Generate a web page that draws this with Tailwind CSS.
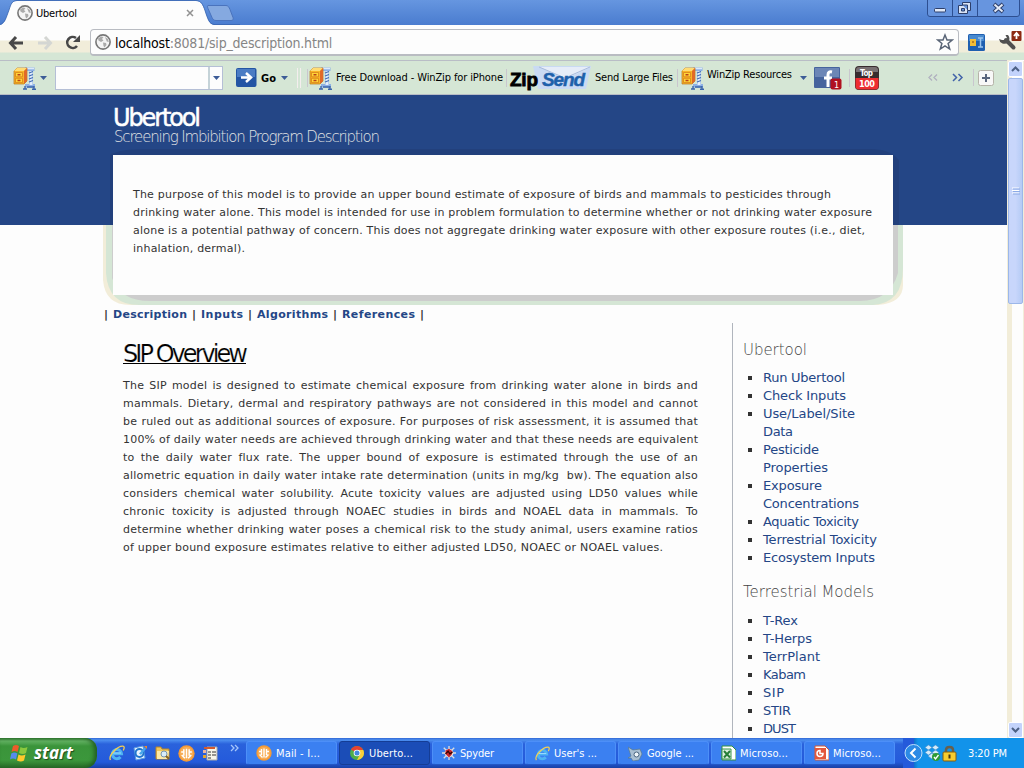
<!DOCTYPE html>
<html lang="en">
<head>
<meta charset="utf-8">
<title>Ubertool</title>
<script src="https://cdn.jsdelivr.net/npm/@tailwindcss/browser@4"></script>
</head>
<body class="w-[1024px] h-[768px] overflow-hidden flex flex-col bg-[#fdfdfd] text-[#333] font-['DejaVu_Sans',sans-serif] text-[11px] leading-[18px]">
<svg class="hidden">
  <symbol id="globe" viewBox="0 0 16 16"><circle cx="8" cy="8" r="7.1" fill="#f4f4f4" stroke="#777" stroke-width="1.6"/><path d="M3 4.5 6 2.5 8.5 3 7 5 8.5 6.5 6 8 3.5 6.5zM8 8.5 11 9 11.5 11 9.5 13.6 8.5 12zM10 3l3 2 .8 3-2-.5z" fill="#aaa"/></symbol>
  <symbol id="winzip" viewBox="0 0 24 24"><path d="M12 1.500h9.500v3.500h-1.500v13h2v3.500H12V18h4V5h-4z" fill="#8db0e4"/><path d="M14 2.500h7" stroke="#dce9fa" stroke-width="1.600"/><path d="M18 5v14" stroke="#e4eefb" stroke-width="3"/><path d="M16 7l4-1.500M16 10l4-1.500M16 13l4-1.500M16 16l4-1.500" stroke="#3f6cb4" stroke-width="1.200"/><path d="M10 23h4M12 23v-3M14 21h7M19 23.300h4M21 23v-3" stroke="#3b65ac" stroke-width="1.400"/><path d="M1 5l3-3h10v13l-3 3H1z" fill="#f8b526" stroke="#b9741c" stroke-width=".7"/><path d="M1 5l3-3h10l-3 3z" fill="#ffdc75"/><path d="M11 5v13l3-3V2z" fill="#e06a28"/><path d="M2.500 6.500h7v4.300h-7zM2.500 12.300h7v4.300h-7z" fill="#ffd437" stroke="#d8801c" stroke-width=".8"/><path d="M4.500 8.800h3M4.500 14.500h3" stroke="#b8401a" stroke-width="1.500"/></symbol>
  <symbol id="down" viewBox="0 0 7 4"><path d="M0 0h7L3.5 4z" fill="#3d5c97"/></symbol>
  <symbol id="ie" viewBox="0 0 16 16"><path d="M3 8.700h9.500A4.600 4.600 0 1 0 11.500 12" fill="none" stroke="#4fb4f3" stroke-width="3"/><path d="M4 8h8" stroke="#9bdcfd" stroke-width="1"/><path d="M1.500 15C-1 11 8 1 14 1.200c2 .3 1 3 .2 4.300" fill="none" stroke="#f5cf52" stroke-width="1.300"/></symbol>
  <symbol id="orange" viewBox="0 0 16 16"><circle cx="8" cy="8" r="7.700" fill="#f59a35"/><circle cx="8" cy="8" r="6.300" fill="#f7ad56"/><path d="M3 6.500h2.500V4M13 6.500h-2.500V4M8 3.500v9M3.500 9.500l3 3M12.500 9.500l-3 3M5.500 7v3M10.500 7v3" stroke="#fff" stroke-width="1.400" fill="none"/></symbol>
</svg>

<!-- Tab strip -->
<header class="relative h-[25px] shrink-0 bg-gradient-to-b from-[#6696e0] to-[#4a7ccf]">
  <svg class="absolute left-0 top-0" width="240" height="25"><path d="M0 25C5 24 6 18 9 10 11 4 12 1 17 1H196c5 0 7 4 9 10 3 9 4 13 9 14z" fill="#fdfdfd"/><path d="M0 24.500C5 23 6 18 9 10 11 4 12 .5 17 .5H196c5 0 7 4 9 10 3 9 4 13 9 14H240" fill="none" stroke="#3a66b0" stroke-width=".8"/><path d="M208 5.500h18c2 0 3 1.500 4 4l3 8c.6 2 0 3-2 3h-15c-2 0-3-1-4-3l-4-9c-.8-2-.5-3 0-3z" fill="#85a9e0" stroke="#4a73bd"/></svg>
  <div class="relative flex items-center h-[26px] pl-[17px] text-black font-['DejaVu_Sans_Condensed','DejaVu_Sans']">
    <svg width="16" height="16"><use href="#globe"/></svg>
    <span class="ml-[3px] w-[150px] pt-px whitespace-nowrap"><span data-w="41">Ubertool</span></span>
    <svg width="8" height="8" viewBox="0 0 8 8"><path d="M1 1l6 6M7 1 1 7" stroke="#929292" stroke-width="1.500"/></svg>
  </div>
  <svg class="absolute left-[927px] top-0" width="94" height="18"><path d="M.5 0v14q0 2.500 2.500 2.500h87q2.500 0 2.500-2.500V0M25.500 0v16M50.500 0v16" fill="#6795df" stroke="#2d4f91"/><rect x="7.500" y="8.500" width="11" height="3.500" rx="1" fill="#e2eaf8" stroke="#2d3f6b"/><path d="M35.500 2.500h8v8h-3v3h-9v-8h4z" fill="#d9e3f5" stroke="#2d3f6b"/><path d="M34.500 8.500h3v2.500h-3zM35.500 5h5v5" fill="#6795df" stroke="#2d3f6b"/><path d="M67 4l9 8M76 4l-9 8" stroke="#2d3f6b" stroke-width="4"/><path d="M67.500 4.500l8 7M75.500 4.500l-8 7" stroke="#e2eaf8" stroke-width="2"/></svg>
</header>

<!-- Address bar -->
<div class="flex items-center h-[35px] shrink-0 pl-[8px] bg-[linear-gradient(#fdfdfd_0,#fdfdfd_15px,#f1edda_16px,#f1edda_27px,#d5e6d5_28px)]">
  <svg width="82" height="20" viewBox="0 0 82 20"><path d="M15 10H3M8 4 2.500 10 8 16" fill="none" stroke="#484848" stroke-width="3"/><path d="M30 10h12M37 4l5.500 6L37 16" fill="none" stroke="#d4d6d3" stroke-width="3"/><path d="M69 13a5.500 5.500 0 1 1-1-8" fill="none" stroke="#484848" stroke-width="2.600"/><path d="M65 9h7V2z" fill="#484848"/></svg>
  <div class="flex items-center w-[869px] h-[27px] rounded-[4px] border border-[#b9bcc2] border-b-2 bg-[#fdfdfd] pl-[4px] pr-[4px]">
    <svg width="16" height="16"><use href="#globe"/></svg>
    <div class="ml-[4px] pt-px flex-1 text-[14px] text-[#858585] whitespace-nowrap font-['DejaVu_Sans_Condensed','DejaVu_Sans']"><span data-w="217">​<span class="text-black">localhost</span>:8081/sip_description.html</span></div>
    <svg width="18" height="18" viewBox="0 0 18 18"><path d="M9 2l2 5h5.300l-4.200 3.500L13.700 16 9 12.800 4.300 16l1.600-5.500L1.700 7H7z" fill="#fff" stroke="#5a6577" stroke-width="1.500"/></svg>
  </div>
  <svg class="ml-[9px]" width="17" height="17" viewBox="0 0 17 17"><rect width="17" height="17" rx="1.500" fill="#1f5fb0"/><path d="M1 1h15v6H1z" fill="#4789cf"/><path d="M2 5h6v7H2z" fill="#f5bd36"/><path d="M4 8h2" stroke="#8a4a10"/><path d="M10 4h5M12.500 4v9M10 13h5" stroke="#9cc5ee" stroke-width="1.500"/></svg>
  <svg class="ml-[14px] -mt-[4px] shrink-0" width="23" height="22" viewBox="0 0 23 22"><path d="M7 10 14.500 17.500" stroke="#505050" stroke-width="4" stroke-linecap="round"/><path d="M0 9a5.500 5.500 0 0 0 9 3.500A5.500 5.500 0 0 0 9 5L6.500 5 8 8 6 10 3 10z" fill="#505050"/><rect x="12.500" y="1" width="10" height="10" rx="1" fill="#8c2a12"/><path d="M17.500 9V4M15 6l2.500-3L20 6" stroke="#fff" stroke-width="1.800" fill="none"/></svg>
</div>

<div class="flex flex-1 min-h-0">
  <div class="w-[1007px] flex flex-col min-h-0">
    <!-- WinZip toolbar -->
    <div class="flex items-center h-[35px] shrink-0 border-t border-b border-[#b9bdc6] bg-[#d5e6d5] pl-[13px] text-black whitespace-nowrap font-['DejaVu_Sans_Condensed','DejaVu_Sans']">
      <svg width="24" height="24"><use href="#winzip"/></svg>
      <svg class="ml-[3px]" width="7" height="4"><use href="#down"/></svg>
      <div class="flex ml-[8px] w-[168px] h-[24px] border border-[#b5bfd6] bg-[#fdfdfd]"><div class="w-[154px] border-r-2 border-[#c5d3d8]"></div><div class="flex-1 flex items-center justify-center"><svg width="7" height="4"><use href="#down"/></svg></div></div>
      <svg class="ml-[13px]" width="21" height="19"><rect width="20.500" height="19" rx="2" fill="#2456a4"/><path d="M1 1h18v8H1z" fill="#4a7cc4"/><path d="M5 9.500h8M10 5l5 4.500L10 14" stroke="#fff" stroke-width="2.500" fill="none"/></svg>
      <span class="ml-[4px] w-[20px] font-bold text-[11px] pt-[2px]"><span data-w="15">Go</span></span>
      <svg width="7" height="4"><use href="#down"/></svg>
      <i class="ml-[9px] h-[20px] w-[4px] border-x border-[#f4eeee]"></i><i class="ml-[6px] mr-[1px] h-[18px] w-px bg-[#c9c6ce]"></i>
      <svg width="24" height="24"><use href="#winzip"/></svg>
      <span class="ml-[3px] w-[170px]"><span data-w="167">Free Download - WinZip for iPhone</span></span>
      <i class="mr-[3px] h-[18px] w-px bg-[#c9c6ce]"></i>
      <div class="relative w-[82px] h-[24px] font-['Liberation_Sans'] font-bold leading-[24px]">
        <svg class="absolute left-[22px] top-0" width="61" height="24"><path d="M1 0h58l-5 23H6z" fill="#c9daf3"/><path d="M8 1l25 12L59 1z" fill="#e6edf8"/><path d="M7 1l26 11L58 1" fill="none" stroke="#a9bcdc"/></svg>
        <span class="absolute left-0 top-[2px] text-[19px] [-webkit-text-stroke:0.8px_black]" data-w="28">Zip</span><span class="absolute left-[32px] top-[2px] text-[19px] italic text-[#1d60aa] [-webkit-text-stroke:0.4px_#1d60aa]" data-w="43">Send</span>
      </div>
      <span class="ml-[3px] w-[82px]"><span data-w="78">Send Large Files</span></span>
      <i class="mr-[3px] h-[18px] w-px bg-[#c9c6ce]"></i>
      <svg width="24" height="24"><use href="#winzip"/></svg>
      <span class="ml-[2px] w-[93px] -mt-[5px]"><span data-w="85">WinZip Resources</span></span>
      <svg width="7" height="4"><use href="#down"/></svg>
      <svg class="ml-[7px]" width="28" height="24"><rect y="1" width="26" height="21" rx="1" fill="#46649d"/><path d="M1 2h24v9H1z" fill="#6c86b6"/><path d="M18 6q-4-1-4 3v12M10 12h8" stroke="#fff" stroke-width="3" fill="none"/><rect x="16.500" y="12.500" width="11" height="11" rx="2" fill="#b01120"/><text x="20" y="21.500" fill="#fff" font-size="9">1</text></svg>
      <i class="ml-[7px] mr-[5px] h-[18px] w-px bg-[#c9c6ce]"></i>
      <svg width="24" height="24" font-family="DejaVu Sans Condensed" font-weight="bold" fill="#fff"><rect width="24" height="24" rx="4" fill="#382c2e"/><path d="M1 4q0-3 3-3h16q3 0 3 3v2H1z" fill="#787072"/><path d="M.5 12h23v8q0 3.500-3.500 3.500H4Q.5 23.500.5 20z" fill="#ee2e31"/><text x="5" y="10" font-size="8" textLength="13">Top</text><text x="4" y="21" font-size="9" textLength="16">100</text></svg>
      <svg class="ml-[49px]" width="58" height="20" fill="none"><path d="M4 6.500 1 9.500l3 3M9 6.500 6 9.500l3 3" stroke="#b0b0bf" stroke-width="1.300"/><path d="M25 6l3.500 3.500L25 13M30.500 6 34 9.500 30.500 13" stroke="#4263a9" stroke-width="1.500"/><path d="M45.500 1v17" stroke="#c9c6ce"/></svg>
      <svg class="-ml-[8px]" width="16" height="16"><rect x=".5" y=".5" width="15" height="15" rx="2" fill="#f8f8f8" stroke="#b5b3a8"/><path d="M8 4v8M4 8h8" stroke="#59657d" stroke-width="2"/></svg>
    </div>

    <!-- Page -->
    <main class="flex-1 min-h-0 overflow-hidden bg-[linear-gradient(#244686_0,#244686_130px,#fdfdfd_130px)]">
      <div class="h-[60px] pl-[113px] pt-[12px]">
        <h1 class="text-[24px] leading-[22px] text-white whitespace-nowrap [-webkit-text-stroke:0.5px_white]"><span data-w="88">Ubertool</span></h1>
        <p class="pl-px text-[15px] leading-[17px] text-[#e0e2e4] font-extralight whitespace-nowrap"><span data-w="266">Screening Imbibition Program Description</span></p>
      </div>
      <section class="relative isolate ml-[113px] w-[780px] h-[140px] bg-[#fdfdfd] px-[20px] pt-[31px] whitespace-nowrap">
        <svg class="absolute -z-20 -left-[13px] -top-[7px]" width="806" height="158"><path d="M10 7Q20 1 45 1H770Q790 1 799 12V77H10z" fill="#22407c"/><path d="M3 77V132Q5 157 30 157H778Q803 155 803 137V77z" fill="#f2edd9"/><path d="M6 77V125Q8 157 39 157H773Q803 155 803 120V77z" fill="#d5e6d5"/><path d="M12 77V130Q20 153 50 153H760Q790 153 798 125V77z" fill="#cdcdcd"/></svg>
        <div class="absolute -z-10 inset-0 bg-[#fdfdfd]"></div>
        <p><span class="block"><span data-w="698">The purpose of this model is to provide an upper bound estimate of exposure of birds and mammals to pesticides through</span></span><span class="block"><span data-w="739">drinking water alone. This model is intended for use in problem formulation to determine whether or not drinking water exposure</span></span><span class="block"><span data-w="732">alone is a potential pathway of concern. This does not aggregate drinking water exposure with other exposure routes (i.e., diet,</span></span><span class="block"><span data-w="112">inhalation, dermal).</span></span></p>
      </section>
      <nav class="flex ml-[104px] mt-[11px] h-[17px] font-bold whitespace-nowrap text-[#244686]">
        <b class="w-[9px] text-[#333]">|</b><a class="w-[79px]"><span data-w="74">Description</span></a><b class="w-[9px] text-[#333]">|</b><a class="w-[47px]"><span data-w="42">Inputs</span></a><b class="w-[9px] text-[#333]">|</b><a class="w-[76px]"><span data-w="71">Algorithms</span></a><b class="w-[9px] text-[#333]">|</b><a class="w-[78px]"><span data-w="73">References</span></a><b class="w-[9px] text-[#333]">|</b>
      </nav>
      <div class="flex h-[430px] whitespace-nowrap">
        <article class="w-[732px] pl-[123px] pr-[34px] pt-[17px]">
          <h2 class="h-[28px] text-[24px] leading-[28px] text-black mb-[9px]"><span class="block border-b border-black w-[123px] h-[24px]"><span class="[-webkit-text-stroke:0.2px_#fdfdfd]" data-w="125">SIP Overview</span></span></h2>
          <p id="overview"><span class="block [text-align-last:justify]">The SIP model is designed to estimate chemical exposure from drinking water alone in birds and</span><span class="block [text-align-last:justify]">mammals. Dietary, dermal and respiratory pathways are not considered in this model and cannot</span><span class="block [text-align-last:justify]">be ruled out as additional sources of exposure. For purposes of risk assessment, it is assumed that</span><span class="block"><span data-w="575">100% of daily water needs are achieved through drinking water and that these needs are equivalent</span></span><span class="block [text-align-last:justify]">to the daily water flux rate. The upper bound of exposure is estimated through the use of an</span><span class="block [text-align-last:justify]">allometric equation in daily water intake rate determination (units in mg/kg&nbsp; bw). The equation also</span><span class="block [text-align-last:justify]">considers chemical water solubility. Acute toxicity values are adjusted using LD50 values while</span><span class="block [text-align-last:justify]">chronic toxicity is adjusted through NOAEC studies in birds and NOAEL data in mammals. To</span><span class="block [text-align-last:justify]">determine whether drinking water poses a chemical risk to the study animal, users examine ratios</span><span class="block"><span id="last" data-w="540">of upper bound exposure estimates relative to either adjusted LD50, NOAEC or NOAEL values.</span></span></p>
        </article>
        <aside class="w-[160px] border-l border-[#b0b5bd] pl-[10px] pt-[18px] text-[#244686] text-[13px]">
          <h3 class="text-[15px] text-[#444] font-extralight mb-[10px]"><span data-w="64">Ubertool</span></h3>
          <ul class="list-none [&>li]:relative [&>li]:pl-[20px] [&>li]:before:absolute [&>li]:before:left-[5px] [&>li]:before:top-[7px] [&>li]:before:size-[4px] [&>li]:before:bg-[#333] [&>li]:before:content-['']">
            <li><span data-w="82">Run Ubertool</span></li><li><span data-w="83">Check Inputs</span></li><li><span data-w="92">Use/Label/Site</span><br><span data-w="30">Data</span></li><li><span data-w="56">Pesticide</span><br><span data-w="65">Properties</span></li><li><span data-w="59">Exposure</span><br><span data-w="96">Concentrations</span></li><li><span data-w="96">Aquatic Toxicity</span></li><li><span data-w="114">Terrestrial Toxicity</span></li><li><span data-w="112">Ecosystem Inputs</span></li>
          </ul>
          <h3 class="text-[15px] text-[#444] font-extralight mt-[16px] mb-[11px]"><span data-w="131">Terrestrial Models</span></h3>
          <ul class="list-none [&>li]:relative [&>li]:pl-[20px] [&>li]:before:absolute [&>li]:before:left-[5px] [&>li]:before:top-[7px] [&>li]:before:size-[4px] [&>li]:before:bg-[#333] [&>li]:before:content-['']">
            <li><span data-w="35">T-Rex</span></li><li><span data-w="49">T-Herps</span></li><li><span data-w="57">TerrPlant</span></li><li><span data-w="43">Kabam</span></li><li><span data-w="21">SIP</span></li><li><span data-w="28">STIR</span></li><li><span data-w="33">DUST</span></li>
          </ul>
        </aside>
      </div>
    </main>
  </div>
  <!-- Scrollbar -->
  <div class="w-[17px] flex flex-col items-center bg-[#fdfdfd] border-l-[5px] border-[#f2edd9] pt-[1px]">
    <div class="-ml-[4px] w-[16px] flex-1 flex flex-col border-r border-[#f2edd9]">
      <div class="h-[16px] rounded-[2px] border border-white bg-[#c3d3fb] flex items-center justify-center"><svg width="9" height="6"><path d="M1 5l3.500-3.500L8 5" fill="none" stroke="#4d6185" stroke-width="2"/></svg></div>
      <div class="h-[226px] mt-px rounded-[2px] border border-[#9cb7e9] bg-gradient-to-r from-[#c8d6fb] via-[#c8d6fb] to-[#b5cbf5] flex items-center justify-center"><svg width="8" height="9"><path d="M0 1h7M0 3.500h7M0 6h7" stroke="#fff"/><path d="M1 2h7M1 4.500h7M1 7h7" stroke="#8caae6"/></svg></div>
      <div class="mt-auto h-[16px] rounded-[2px] border border-white bg-[#c3d3fb] flex items-center justify-center"><svg width="9" height="6"><path d="M1 1l3.500 3.500L8 1" fill="none" stroke="#4d6185" stroke-width="2"/></svg></div>
    </div>
  </div>
</div>

<!-- Taskbar -->
<footer class="flex h-[30px] shrink-0 whitespace-nowrap text-white font-['DejaVu_Sans_Condensed','DejaVu_Sans'] bg-[linear-gradient(#3168d5_0,#4c8ff0_2px,#2a62dc_6px,#245adb_24px,#1941a5_30px)]">
  <div class="w-[97px] flex items-center rounded-r-[12px] pl-[10px] bg-[linear-gradient(#388238_0,#63b263_3px,#3a943a_8px,#3c973c_22px,#276b27_30px)] shadow-[inset_-3px_0_4px_#235f23]">
    <svg width="20" height="20" viewBox="0 0 20 20"><path d="M3 3q3-2 6 0L7.500 9q-3-2-6 0z" fill="#ec5b2b"/><path d="M10.500 4q3 2 7 0L16 10q-3 2-7 0z" fill="#8ac83e"/><path d="M1.300 10.500q3-2 6 0L6 16.500q-3-2-6 0z" fill="#568bee"/><path d="M8.500 11.500q3 2 7 0L14 17.500q-3 2-7 0z" fill="#ffc92c"/></svg>
    <span class="ml-[4px] text-[17px] italic font-bold font-['Open_Sans'] [text-shadow:1px_1px_1px_#1c4a1c]"><span data-w="39">start</span></span>
  </div>
  <div class="flex items-center w-[149px] pl-[12px] gap-[7px]">
    <svg width="16" height="18"><use href="#ie"/></svg>
    <svg width="16" height="16"><path d="M2 3l9-2 2 12-9 2z" fill="#e9f4ff" stroke="#5a9ce2"/><circle cx="7.500" cy="8" r="4" fill="none" stroke="#1f76ce" stroke-width="2"/><path d="M7 8.500 13 2l1 2-5 6z" fill="#47a7ec"/><path d="M12 1h3v3" fill="#f0852a"/></svg>
    <svg width="16" height="16"><path d="M1 2h5l1 2h7v10H1z" fill="#f0c65a" stroke="#b4842b"/><path d="M2 6h12l-1 8H2z" fill="#ffe9a5"/><circle cx="9" cy="9" r="3" fill="#d9edfa" stroke="#7696b1"/><path d="M11 11l3 3" stroke="#866222" stroke-width="2"/></svg>
    <svg width="17" height="17"><use href="#orange"/></svg>
    <svg width="17" height="17"><path d="M5 2h10v13H5z" fill="#f7f5ea" stroke="#aaa"/><path d="M2 2h11v2H2z" fill="#d55b2d"/><path d="M6 7h3M6 10h3M6 13h3M10 7h4M10 10h4" stroke="#333"/><path d="M1 5h3v3H1z" fill="#e9b4a0"/><path d="M1 10h3v3H1z" fill="#e4a62f"/></svg>
    <svg class="ml-[4px] -mt-[11px]" width="10" height="8"><path d="M1 1l3 3-3 3M5 1l3 3-3 3" fill="none" stroke="#a5c6fb" stroke-width="1.300"/></svg>
  </div>
  <div class="flex pt-[3px] gap-[2px] w-[657px] [&>div]:flex [&>div]:items-center [&>div]:w-[91px] [&>div]:h-[24px] [&>div]:rounded-[3px] [&>div]:pl-[9px] [&>div]:gap-[4px] [&>div]:border [&>div]:border-[#4d8ff8] [&>div]:border-b-[#2358c5]">
    <div class="bg-[#3b80f1]"><svg width="16" height="16"><use href="#orange"/></svg><span class="pt-px" data-w="44">Mail - I...</span></div>
    <div class="bg-[#1b4db7] border-[#153d95]!"><svg width="16" height="16"><circle cx="8" cy="8" r="7" fill="#50ae4b"/><path d="M8 8 1.900 4.500A7 7 0 0 1 14 4.500z" fill="#e64232"/><path d="M8 5h6.300A7 7 0 0 1 8 15l3-6z" fill="#f8ce38"/><circle cx="8" cy="8" r="3.300" fill="#fff"/><circle cx="8" cy="8" r="2.500" fill="#4389df"/></svg><span class="pt-[2px]" data-w="44">Uberto...</span></div>
    <div class="bg-[#3b80f1]"><svg width="14" height="16" viewBox="0 0 16 16"><path d="M8 0v16M0 8h16M2 2l12 12M14 2 2 14" stroke="#ddd" stroke-width="1.500"/><circle cx="8" cy="8" r="5" fill="#e9e4e4"/><path d="M8 3l4 3-1 4-3 3-4-4V5z" fill="#c9272d"/><path d="M4 9l3-3 2 3 3-2" stroke="#300" stroke-width="1.500" fill="none"/></svg><span class="pt-px" data-w="34">Spyder</span></div>
    <div class="bg-[#3b80f1]"><svg width="15" height="17"><use href="#ie"/></svg><span class="pt-px" data-w="43">User's ...</span></div>
    <div class="bg-[#3b80f1]"><svg width="15" height="15"><path d="M0 1l5 3 7-1 2 5-3 6-6 1-2-3H0l3-2z" fill="#a9bfd2" stroke="#58788e" stroke-width=".7"/><circle cx="8.500" cy="8.500" r="2.500" fill="#f0f7fa" stroke="#486480"/></svg><span class="pt-px" data-w="47">Google ...</span></div>
    <div class="bg-[#3b80f1]"><svg width="15" height="16"><path d="M1 1h10l4 4v10H1z" fill="#fff" stroke="#329042"/><path d="M1 4h9v10H1z" fill="#dff0df" stroke="#39944b"/><path d="M3 6l6 6.500M9 6l-6 6.500" stroke="#277f37" stroke-width="2"/></svg><span class="pt-px" data-w="48">Microso...</span></div>
    <div class="bg-[#3b80f1]"><svg width="15" height="16"><path d="M1 1h10l4 4v10H1z" fill="#fff" stroke="#d85835"/><path d="M1 3h11v11H1z" fill="#e4583c"/><path d="M6 5.500a3 3 0 1 0 3 3H6z" fill="#e4583c" stroke="#fff" stroke-width="1.500"/></svg><span class="pt-px" data-w="48">Microso...</span></div>
  </div>
  <div class="relative flex items-center flex-1 bg-[linear-gradient(90deg,#245adb_11px,#0f72cd_11px,#1293ea_15px,#1293ea)]">
    <svg width="20" height="20"><circle cx="10.500" cy="10" r="8.500" fill="#2c8ae5" stroke="#bfe0fc"/><path d="M12.500 5.500 8 10l4.500 4.500" fill="none" stroke="#fff" stroke-width="2"/></svg>
    <svg class="ml-[1px]" width="17" height="18"><path d="M4.500 1 8 3.500 4.500 6 1 3.500zM11.500 1 15 3.500 11.500 6 8 3.500zM4.500 6 8 8.500 4.500 11 1 8.500zM11.500 6 15 8.500 11.500 11 8 8.500zM4 12l4-3 4 3-4 3z" fill="#d5ebfb" stroke="#4b91c8" stroke-width=".6"/><circle cx="12" cy="13" r="4" fill="#2e9b35"/><path d="M10 13l1.500 2 3-4" stroke="#fff" fill="none" stroke-width="1.300"/></svg>
    <svg class="ml-[1px]" width="15" height="17"><path d="M4 8V5q0-3 3.500-3T11 5v3" fill="none" stroke="#68604c" stroke-width="2.500"/><rect x="1" y="7" width="13" height="9" rx="1" fill="#f7cc2e" stroke="#815f12"/><path d="M7.500 9.500v4" stroke="#493610" stroke-width="2"/></svg>
    <span class="ml-[11px] pt-px"><span data-w="39">3:20 PM</span></span>
  </div>
</footer>
<script>
// Spread each label's letters so that it takes its intended width.
function fit() {
  document.querySelectorAll('[data-w]').forEach(function (el) {
    el.style.letterSpacing = '0px';
    var w = el.getBoundingClientRect().width, n = el.textContent.length;
    el.style.letterSpacing = ((el.dataset.w - w) / (n - 1)) + 'px';
  });
  document.getElementById('overview').style.letterSpacing = document.getElementById('last').style.letterSpacing;
}
fit();
addEventListener('load', fit);
document.fonts.ready.then(fit);
new ResizeObserver(fit).observe(document.body);
new MutationObserver(fit).observe(document.head, { childList: true, subtree: true });
</script>
</body>
</html>
